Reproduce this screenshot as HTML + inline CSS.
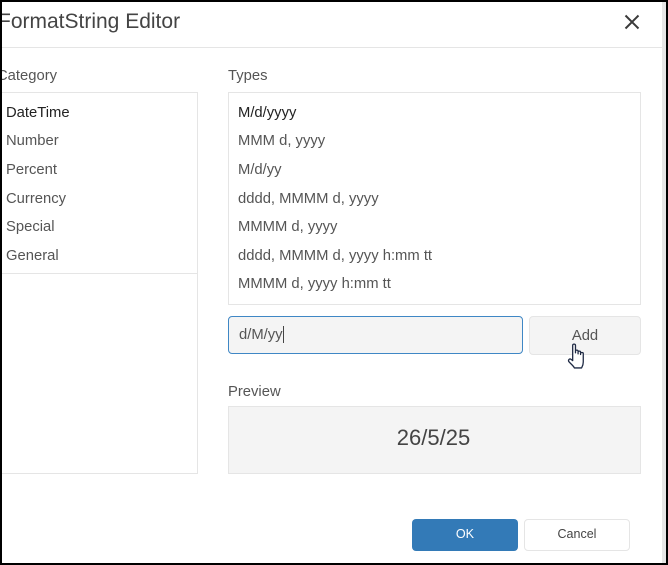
<!DOCTYPE html>
<html>
<head>
<meta charset="utf-8">
<style>
html,body{margin:0;padding:0;background:#fff}
#p{position:relative;width:668px;height:565px;overflow:hidden;background:#fff;font-family:"Liberation Sans",sans-serif;font-size:14.8px;color:#555}
#p div{position:absolute;box-sizing:border-box;white-space:nowrap}
.t{line-height:16px}
.box{border:1px solid #e5e5e5;background:#fff}
</style>
</head>
<body>
<div id="p">
<div style="left:662px;top:0;width:4px;height:565px;background:#e6e6e6"></div>
<div style="left:2px;top:47px;width:660px;height:1px;background:#e5e5e5"></div>

<div class="t" style="left:-2px;top:10px;line-height:24px;font-size:21px;color:#444">FormatString Editor</div>
<svg style="position:absolute;left:624px;top:14px" width="16" height="16" viewBox="0 0 16 16"><path d="M1.5 1.5L14.5 14.5M14.5 1.5L1.5 14.5" stroke="#3a3a3a" stroke-width="2" fill="none"/></svg>

<div class="t" style="left:-3px;top:68px;color:#555">Category</div>
<div class="t" style="left:228px;top:68px;color:#555">Types</div>

<div class="box" style="left:-2px;top:92px;width:200px;height:382px"></div>
<div style="left:2px;top:273px;width:195px;height:1px;background:#e5e5e5"></div>
<div class="t" style="left:6px;top:105px;color:#222">DateTime</div>
<div class="t" style="left:6px;top:133px">Number</div>
<div class="t" style="left:6px;top:162px">Percent</div>
<div class="t" style="left:6px;top:191px">Currency</div>
<div class="t" style="left:6px;top:219px">Special</div>
<div class="t" style="left:6px;top:248px">General</div>

<div class="box" style="left:228px;top:92px;width:413px;height:213px"></div>
<div class="t" style="left:238px;top:105px;color:#222">M/d/yyyy</div>
<div class="t" style="left:238px;top:133px">MMM d, yyyy</div>
<div class="t" style="left:238px;top:162px">M/d/yy</div>
<div class="t" style="left:238px;top:191px">dddd, MMMM d, yyyy</div>
<div class="t" style="left:238px;top:219px">MMMM d, yyyy</div>
<div class="t" style="left:238px;top:248px">dddd, MMMM d, yyyy h:mm tt</div>
<div class="t" style="left:238px;top:276px">MMMM d, yyyy h:mm tt</div>

<div style="left:228px;top:316px;width:295px;height:38px;background:#f4f4f4;border:1px solid #3f87c5;border-radius:4px"></div>
<div class="t" style="left:239px;top:327px">d/M/yy</div>
<div style="left:283px;top:326px;width:1px;height:17px;background:#444"></div>

<div class="t" style="left:529px;top:316px;width:112px;height:39px;line-height:39px;background:#f4f4f4;border:1px solid #e5e5e5;border-radius:4px;text-align:center">Add</div>

<svg style="position:absolute;left:566px;top:342px" width="22" height="27" viewBox="0 0 20 25"><path d="M6 16.5V3.2C6 1.6 8.6 1.6 8.6 3.2V10V8.6C8.6 7.2 11 7.2 11 8.6V11V9.4C11 8.1 13.3 8.1 13.3 9.4V11.6V10.6C13.3 9.4 15.8 9.4 15.8 10.6V18.5C15.8 21.5 15 22.5 14.2 24H7.6C6.6 22 5 21 2.6 18.4C1.4 16.8 3 15 4.4 16L6 17.2Z" fill="#fff" stroke="#1f2a44" stroke-width="1.2" stroke-linejoin="round"/></svg>

<div class="t" style="left:228px;top:384px">Preview</div>
<div style="left:228px;top:406px;width:413px;height:68px;background:#f4f4f4;border:1px solid #e5e5e5"></div>
<div style="left:227px;top:426px;width:413px;height:24px;line-height:24px;text-align:center;font-size:22px;color:#444">26/5/25</div>

<div style="left:412px;top:519px;width:106px;height:32px;line-height:30px;background:#337ab7;border-radius:4px;color:#fff;text-align:center;font-size:12.6px">OK</div>
<div style="left:524px;top:519px;width:106px;height:32px;line-height:29px;background:#fff;border:1px solid #e5e5e5;border-radius:4px;color:#444;text-align:center;font-size:12.5px">Cancel</div>

<div style="left:0;top:0;width:668px;height:2px;background:#000"></div>
<div style="left:0;top:0;width:2px;height:565px;background:#000"></div>
<div style="left:0;top:563px;width:668px;height:2px;background:#000"></div>
<div style="left:666px;top:0;width:2px;height:565px;background:#000"></div>
</div>
</body>
</html>
